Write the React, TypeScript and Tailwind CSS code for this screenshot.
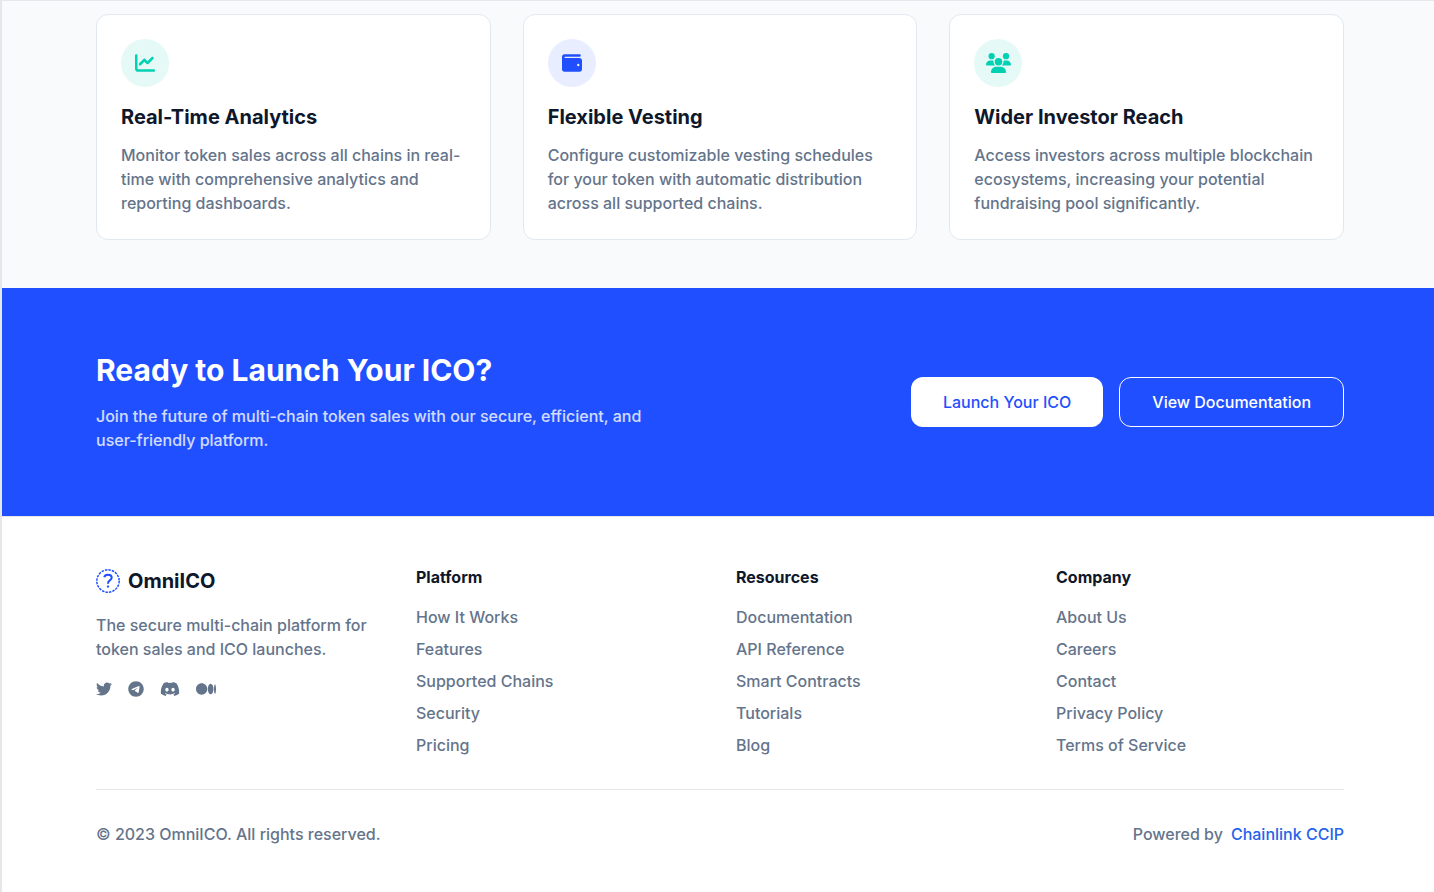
import type { ReactNode } from "react";
import {
  FaChartLine,
  FaDiscord,
  FaMedium,
  FaTelegram,
  FaTwitter,
  FaUsers,
  FaWallet,
} from "react-icons/fa6";

type Feature = {
  title: string;
  text: string;
  icon: ReactNode;
  tone: string;
};

const features: Feature[] = [
  {
    title: "Real-Time Analytics",
    text: "Monitor token sales across all chains in real-time with comprehensive analytics and reporting dashboards.",
    icon: <FaChartLine className="h-5 w-5" />,
    tone: "bg-[#e5f9f6] text-[#00d1b2]",
  },
  {
    title: "Flexible Vesting",
    text: "Configure customizable vesting schedules for your token with automatic distribution across all supported chains.",
    icon: <FaWallet className="h-5 w-5" />,
    tone: "bg-[#e8edff] text-[#1f4fff]",
  },
  {
    title: "Wider Investor Reach",
    text: "Access investors across multiple blockchain ecosystems, increasing your potential fundraising pool significantly.",
    icon: <FaUsers className="h-5 w-[25px]" />,
    tone: "bg-[#e5f9f6] text-[#00d1b2]",
  },
];

const columns = [
  {
    title: "Platform",
    links: ["How It Works", "Features", "Supported Chains", "Security", "Pricing"],
  },
  {
    title: "Resources",
    links: ["Documentation", "API Reference", "Smart Contracts", "Tutorials", "Blog"],
  },
  {
    title: "Company",
    links: ["About Us", "Careers", "Contact", "Privacy Policy", "Terms of Service"],
  },
];

const socials = [
  { name: "Twitter", icon: <FaTwitter className="size-4" /> },
  { name: "Telegram", icon: <FaTelegram className="size-4" /> },
  { name: "Discord", icon: <FaDiscord className="h-4 w-5" /> },
  { name: "Medium", icon: <FaMedium className="h-4 w-5" /> },
];

function LogoMark() {
  return (
    <svg className="size-6 text-[#1f4fff]" viewBox="0 0 24 24" fill="none" stroke="currentColor" aria-hidden="true">
      <circle cx="12" cy="12" r="11.2" strokeWidth="1.5" strokeDasharray="2.5 1.02" />
      <path
        d="M8.2 8.3C8.6 6.5 10 5.7 12 5.7c2.3 0 3.7 1.1 3.7 2.9 0 1.4-.8 2.1-1.9 2.8-1.2.8-1.8 1.4-1.8 2.8v.6"
        strokeWidth="2"
      />
      <rect x="10.9" y="16.4" width="2.2" height="2.2" rx="0.6" fill="currentColor" stroke="none" />
    </svg>
  );
}

function Container({ children }: { children: ReactNode }) {
  return <div className="mx-auto max-w-7xl px-4">{children}</div>;
}

function Features() {
  return (
    <section className="border-t border-[#e5e7eb] bg-[#f9fafc] pt-[13px] pb-12 pl-1">
      <Container>
        <div className="grid gap-8 md:grid-cols-3">
          {features.map((f) => (
            <article key={f.title} className="rounded-xl border border-[#e2e8f0] bg-white p-6">
              <div className={`mb-4 flex size-12 items-center justify-center rounded-full ${f.tone}`}>{f.icon}</div>
              <h3 className="mb-3 text-xl font-bold text-[#0f172a]">{f.title}</h3>
              <p className="text-[#64748b]">{f.text}</p>
            </article>
          ))}
        </div>
      </Container>
    </section>
  );
}

function CallToAction() {
  return (
    <section className="bg-[#1f4fff] py-16 pl-1 text-white">
      <Container>
        <div className="flex flex-col items-center justify-between gap-8 md:flex-row">
          <div className="max-w-xl">
            <h2 className="mb-4 text-3xl font-bold">Ready to Launch Your ICO?</h2>
            <p className="text-white/80">
              Join the future of multi-chain token sales with our secure, efficient, and user-friendly platform.
            </p>
          </div>
          <div className="flex gap-4">
            <button type="button" className="rounded-xl bg-white px-8 py-[13px] text-[#1f4fff]">
              Launch Your ICO
            </button>
            <button type="button" className="rounded-xl border border-white px-8 py-3">
              View Documentation
            </button>
          </div>
        </div>
      </Container>
    </section>
  );
}

function Footer() {
  return (
    <footer className="border-t border-[#e5e7eb] bg-white pt-12 pb-11 pl-1 text-[#64748b]">
      <Container>
        <div className="grid gap-8 md:grid-cols-4">
          <div>
            <div className="mb-4 flex h-8 items-center gap-2">
              <LogoMark />
              <span className="text-xl font-bold text-[#0f172a]">OmniICO</span>
            </div>
            <p className="mb-4">The secure multi-chain platform for token sales and ICO launches.</p>
            <div className="flex h-6 items-center gap-4">
              {socials.map((s) => (
                <a key={s.name} href="#" aria-label={s.name}>
                  {s.icon}
                </a>
              ))}
            </div>
          </div>
          {columns.map((c) => (
            <nav key={c.title} aria-label={c.title}>
              <h4 className="mb-4 font-bold text-[#0f172a]">{c.title}</h4>
              <ul className="flex flex-col gap-2">
                {c.links.map((l) => (
                  <li key={l}>
                    <a href="#">{l}</a>
                  </li>
                ))}
              </ul>
            </nav>
          ))}
        </div>
        <div className="mt-8 flex items-center justify-between border-t border-[#e5e7eb] pt-8">
          <p>© 2023 OmniICO. All rights reserved.</p>
          <p className="flex gap-2">
            Powered by
            <a href="#" className="text-[#2563eb]">
              Chainlink CCIP
            </a>
          </p>
        </div>
      </Container>
    </footer>
  );
}

export default function App() {
  return (
    <main className="min-h-screen border-l-2 border-[#e5e7eb] bg-white font-['Inter',sans-serif] text-base font-medium">
      <Features />
      <CallToAction />
      <Footer />
    </main>
  );
}
